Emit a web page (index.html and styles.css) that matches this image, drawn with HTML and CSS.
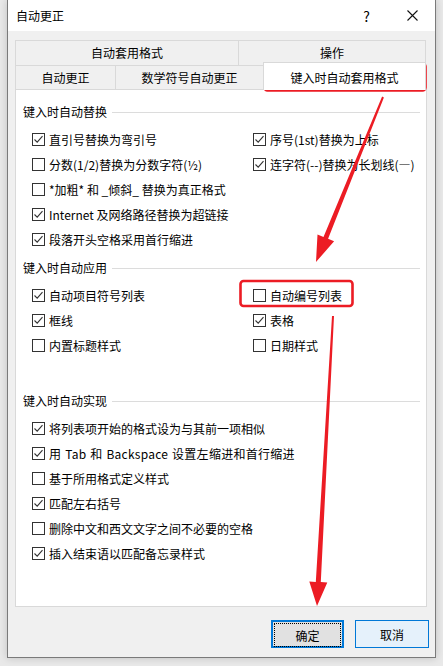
FILE: index.html
```html
<!DOCTYPE html>
<html lang="zh-CN">
<head>
  <meta charset="UTF-8" />
  <title>自动更正</title>
  <link rel="stylesheet" href="styles.css">
</head>
<body>

  <div class="dialog">

    <!-- Title bar -->
    <div class="titlebar">
      <span class="title">自动更正</span>
      <span class="tb-btn">?</span>
      <span class="tb-btn close">
        <svg width="11" height="11" viewBox="0 0 11 11"><path d="M0.5 0.5 L10.5 10.5 M10.5 0.5 L0.5 10.5" stroke="#111" stroke-width="1.1" fill="none"/></svg>
      </span>
    </div>

    <!-- Tabs -->
    <div class="tabs">
      <div class="tab-row">
        <div class="tab w223">自动套用格式</div>
        <div class="tab w187">操作</div>
      </div>
      <div class="tab-row">
        <div class="tab w100">自动更正</div>
        <div class="tab w148">数学符号自动更正</div>
        <div class="tab w162 active">键入时自动套用格式</div>
      </div>
    </div>

    <!-- Panel -->
    <div class="panel">

      <div class="group g1">
        <div class="heading"><span>键入时自动替换</span></div>
        <div class="grid">
          <label class="cb on">直引号替换为弯引号</label>
          <label class="cb on">序号(1st)替换为上标</label>
          <label class="cb">分数(1/2)替换为分数字符(½)</label>
          <label class="cb on">连字符(--)替换为长划线(—)</label>
          <label class="cb span">*加粗* 和 _倾斜_ 替换为真正格式</label>
          <label class="cb on span">Internet 及网络路径替换为超链接</label>
          <label class="cb on span">段落开头空格采用首行缩进</label>
        </div>
      </div>

      <div class="group g2">
        <div class="heading"><span>键入时自动应用</span></div>
        <div class="grid">
          <label class="cb on">自动项目符号列表</label>
          <label class="cb">自动编号列表</label>
          <label class="cb on">框线</label>
          <label class="cb on">表格</label>
          <label class="cb">内置标题样式</label>
          <label class="cb">日期样式</label>
        </div>
      </div>

      <div class="group g3">
        <div class="heading"><span>键入时自动实现</span></div>
        <div class="grid">
          <label class="cb on span">将列表项开始的格式设为与其前一项相似</label>
          <label class="cb on span wide">用 Tab 和 Backspace 设置左缩进和首行缩进</label>
          <label class="cb span">基于所用格式定义样式</label>
          <label class="cb on span">匹配左右括号</label>
          <label class="cb span">删除中文和西文文字之间不必要的空格</label>
          <label class="cb on span">插入结束语以匹配备忘录样式</label>
        </div>
      </div>

    </div>

    <!-- Buttons -->
    <div class="footer">
      <button class="btn ok"><span>确定</span></button>
      <button class="btn cancel">取消</button>
    </div>

  </div>

  <!-- Red annotations drawn over the dialog -->
  <svg class="annot" width="443" height="666" viewBox="0 0 443 666">
    <rect x="264.5" y="63.5" width="161" height="27" rx="3" fill="none" stroke="#ec1c24" stroke-width="2.6"/>
    <rect x="240.5" y="281" width="112" height="25" rx="3" fill="none" stroke="#ec1c24" stroke-width="2.6"/>
    <polygon fill="#ec1c24" points="383.9,97.4 328.1,238.8 334.1,241.3 316,262 317.5,234.5 323.5,237 382.1,96.6"/>
    <polygon fill="#ec1c24" points="334,316.1 320.8,582.1 327.3,582.5 317,606 309.3,581.5 315.8,581.9 332,315.9"/>
  </svg>

</body>
</html>
```

FILE: styles.css
```css
body {
  margin: 0;
  position: relative;
  width: 443px;
  height: 666px;
  overflow: hidden;
  background: #e9e9e9;
  font-family: "Noto Sans CJK SC", "Microsoft YaHei UI", sans-serif;
  font-size: 12px;
  color: #000;
}

.dialog {
  margin-left: 7px;
  width: 427px;
  height: 657px;
  border: 1px solid #7a7a7a;
  border-top: none;
  background: #f0f0f0;
  box-shadow: 0 0 8px rgba(0, 0, 0, 0.18);
  display: flex;
  flex-direction: column;
}

/* Title bar */
.titlebar {
  height: 31px;
  background: #fff;
  display: flex;
  align-items: center;
  padding-left: 8px;
}

.title {
  flex: 1;
}

.tb-btn {
  width: 45px;
  text-align: center;
  font-size: 14px;
}

.tb-btn.close {
  width: 46px;
  display: flex;
  justify-content: center;
}

/* Tabs */
.tabs {
  padding: 9px 0 0 7px;
}

.tab-row {
  display: flex;
}

.tab {
  box-sizing: border-box;
  height: 25px;
  line-height: 24px;
  text-align: center;
  border: 1px solid #d9d9d9;
  border-bottom: none;
  margin-right: -1px;
  background: #f0f0f0;
}

.tab-row + .tab-row .tab {
  height: 24px;
}

.w223 { width: 224px; }
.w187 { width: 188px; }
.w100 { width: 101px; }
.w148 { width: 149px; }
.w162 { width: 163px; }

.tab.active {
  position: relative;
  z-index: 1;
  background: #fff;
  height: 28px !important;
  margin-top: -3px;
  margin-bottom: -1px;
  line-height: 30px;
}

/* Panel */
.panel {
  box-sizing: border-box;
  margin-left: 7px;
  width: 412px;
  height: 518px;
  background: #fff;
  border: 1px solid #d9d9d9;
  padding: 12px 6px 0 7px;
}

.group.g2 { margin-top: 6px; }
.group.g3 { margin-top: 33px; }

.heading {
  height: 20px;
  line-height: 20px;
  margin-bottom: 5px;
  display: flex;
  align-items: center;
  gap: 5px;
}

.heading::after {
  content: "";
  flex: 1;
  height: 1px;
  background: #dcdcdc;
}

.grid {
  display: grid;
  grid-template-columns: 221px 1fr;
  grid-auto-rows: 25px;
  padding-left: 9px;
}

.cb {
  display: flex;
  align-items: center;
  gap: 4px;
  white-space: nowrap;
}

.cb.span {
  grid-column: 1 / 3;
}

.cb.wide {
  letter-spacing: 0.25px;
  word-spacing: 1px;
}

.cb::before {
  content: "";
  flex: none;
  box-sizing: border-box;
  width: 13px;
  height: 13px;
  border: 1px solid #333;
  background: #fff;
}

.cb.on::before {
  background: #fff url("data:image/svg+xml,%3Csvg xmlns='http://www.w3.org/2000/svg' width='11' height='11'%3E%3Cpath d='M1.5 5.5 L4.2 8.2 L9.5 2.2' fill='none' stroke='%23333' stroke-width='1.1'/%3E%3C/svg%3E") center no-repeat;
}

/* Footer buttons */
.footer {
  flex: 1;
  display: flex;
  justify-content: flex-end;
  align-items: flex-start;
  gap: 11px;
  padding: 13px 6px 0 0;
}

.btn {
  box-sizing: border-box;
  width: 74px;
  height: 28px;
  font-family: inherit;
  font-size: 12px;
  color: #000;
  padding: 0;
}

.btn.ok {
  width: 73px;
  background: #e1e1e1;
  border: 2px solid #0078d7;
  padding: 1px;
}

.btn.ok span {
  display: flex;
  align-items: center;
  justify-content: center;
  height: 100%;
  border: 1px dotted #000;
}

.btn.cancel {
  background: #e5f1fb;
  border: 1px solid #0078d7;
}

/* Red annotations */
.annot {
  position: absolute;
  top: 0;
  left: 0;
  pointer-events: none;
}
```
